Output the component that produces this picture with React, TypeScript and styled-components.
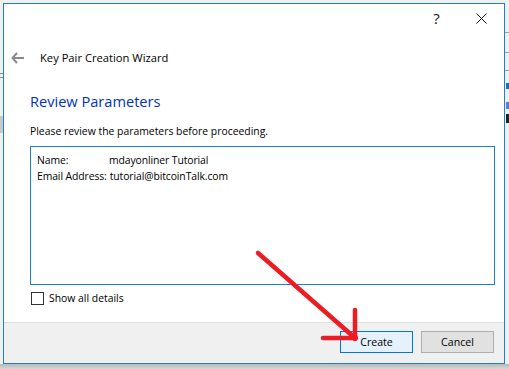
import { ReactElement } from 'react';
import styled, { createGlobalStyle } from 'styled-components';

const GlobalStyle = createGlobalStyle`
  html, body {
    margin: 0;
    padding: 0;
    background: #f0f0f0;
    overflow: hidden;
  }
  * {
    box-sizing: border-box;
  }
`;

export default function App(): ReactElement {
  return (
    <>
      <GlobalStyle />
      <Screen>
        <Backdrop>
          <LeftEdge />
          <Window>
            <CaptionBar>
              <CaptionButton>?</CaptionButton>
              <CaptionButton>
                <svg width='11' height='11' viewBox='0 0 11 11'>
                  <path d='M0.5 0.5 L10.5 10.5 M10.5 0.5 L0.5 10.5' stroke='#111' strokeWidth='1' />
                </svg>
              </CaptionButton>
            </CaptionBar>

            <Header>
              <BackArrow>
                <svg width='14' height='12' viewBox='0 0 14 12'>
                  <path d='M6 1 L1.5 6 L6 11 M1.5 6 L13 6' stroke='#8a8a8a' strokeWidth='2' fill='none' />
                </svg>
              </BackArrow>
              <WizardTitle>Key Pair Creation Wizard</WizardTitle>
            </Header>

            <Body>
              <MainInstruction>Review Parameters</MainInstruction>
              <Description>Please review the parameters before proceeding.</Description>
              <ParamBox>
                <ParamRow>
                  <ParamLabel>Name:</ParamLabel>
                  <span>mdayonliner Tutorial</span>
                </ParamRow>
                <ParamRow>
                  <ParamLabel $tight>Email Address:</ParamLabel>
                  <span>tutorial@bitcoinTalk.com</span>
                </ParamRow>
              </ParamBox>
              <CheckRow>
                <CheckBox />
                <span>Show all details</span>
              </CheckRow>
            </Body>

            <Footer>
              <Button $primary>Create</Button>
              <Button>Cancel</Button>
            </Footer>
          </Window>
          <RightEdge>
            <EdgeLine $top={29} />
            <EdgeLine $top={19} />
            <EdgeLine $top={17} />
            <EdgeMark $color='#1a6fc4' $top={12} $h={6} />
            <EdgeMark $color='#5a7fd8' $top={13} $h={7} />
            <EdgeMark $color='#222' $top={5} $h={9} />
          </RightEdge>
        </Backdrop>
        <Shadow />

        <Annotation width='509' height='369' viewBox='0 0 509 369'>
          <g stroke='#ec1c24' strokeWidth='4.5' strokeLinecap='round' fill='none'>
            <path d='M258 253 L355 338' />
            <path d='M355 310 L355 339' />
            <path d='M323 338 L356 338' />
          </g>
        </Annotation>
      </Screen>
    </>
  );
}

const Screen = styled.div`
  position: relative;
  width: 509px;
  height: 369px;
  overflow: hidden;
  background: #f0f0f0;
  font-family: 'Open Sans', 'Noto Sans', sans-serif;
`;

const Backdrop = styled.div`
  display: flex;
  height: 364px;
  padding-top: 3px;
`;

const LeftEdge = styled.div`
  width: 3px;
  background: linear-gradient(
    to bottom,
    #f0f0f0 0 70px,
    #8a8a8a 70px 71px,
    #f0f0f0 71px 74px,
    #8a8a8a 74px 75px,
    #f0f0f0 75px 113px,
    #c8c8c8 113px 130px,
    #f0f0f0 130px
  );
`;

const RightEdge = styled.div`
  flex: 1;
  display: flex;
  flex-direction: column;
`;

const EdgeLine = styled.div<{ $top: number }>`
  margin-top: ${(p) => p.$top}px;
  height: 1px;
  background: #a0a0a0;
`;

const EdgeMark = styled.div<{ $color: string; $top: number; $h: number }>`
  margin-top: ${(p) => p.$top}px;
  margin-left: 1px;
  width: 3px;
  height: ${(p) => p.$h}px;
  background: ${(p) => p.$color};
`;

const Shadow = styled.div`
  height: 5px;
  background: linear-gradient(to bottom, #b8b8b8, #d8d8d8);
`;

const Window = styled.div`
  width: 502px;
  height: 361px;
  border: 1px solid #1c7ed6;
  background: #fff;
  display: flex;
  flex-direction: column;
`;

const CaptionBar = styled.div`
  height: 28px;
  display: flex;
  justify-content: flex-end;
  align-items: center;
`;

const CaptionButton = styled.div`
  width: 45px;
  height: 28px;
  display: flex;
  align-items: center;
  justify-content: center;
  font-size: 15px;
  color: #111;
`;

const Header = styled.div`
  height: 48px;
  display: flex;
  align-items: center;
  padding-left: 7px;
  padding-top: 3px;
`;

const BackArrow = styled.div`
  width: 29px;
  display: flex;
  align-items: center;
`;

const WizardTitle = styled.div`
  font-size: 11.2px;
  color: #000;
`;

const Body = styled.div`
  flex: 1;
  padding: 10px 9px 0 26px;
  display: flex;
  flex-direction: column;
`;

const MainInstruction = styled.div`
  font-size: 14.6px;
  color: #0033bc;
  height: 22px;
  line-height: 22px;
`;

const Description = styled.div`
  margin-top: 11px;
  font-size: 10.4px;
  line-height: 16px;
  color: #000;
`;

const ParamBox = styled.div`
  margin-top: 7px;
  height: 139px;
  border: 1px solid #1c7ed6;
  padding: 5px 6px;
  font-size: 10.4px;
  letter-spacing: -0.1px;
  color: #000;
`;

const ParamRow = styled.div`
  display: flex;
  height: 16px;
  line-height: 16px;
`;

const ParamLabel = styled.span<{ $tight?: boolean }>`
  width: ${(p) => (p.$tight ? 'auto' : '72px')};
  padding-right: ${(p) => (p.$tight ? '3px' : '0')};
`;

const CheckRow = styled.div`
  margin-top: 6px;
  display: flex;
  align-items: center;
  gap: 5px;
  font-size: 10.4px;
  color: #000;
  padding-left: 1px;
`;

const CheckBox = styled.div`
  width: 13px;
  height: 13px;
  border: 1px solid #333;
  background: #fff;
`;

const Footer = styled.div`
  height: 41px;
  background: #f0f0f0;
  border-top: 1px solid #dfdfdf;
  display: flex;
  justify-content: flex-end;
  align-items: flex-start;
  gap: 8px;
  padding: 8px 10px 0 0;
`;

const Button = styled.div<{ $primary?: boolean }>`
  width: 73px;
  height: 22px;
  display: flex;
  align-items: center;
  justify-content: center;
  font-size: 10.6px;
  color: #000;
  border: 1px solid ${(p) => (p.$primary ? '#0078d7' : '#adadad')};
  background: ${(p) => (p.$primary ? '#e5f1fb' : '#e1e1e1')};
`;

const Annotation = styled.svg`
  position: absolute;
  left: 0;
  top: 0;
  pointer-events: none;
`;
